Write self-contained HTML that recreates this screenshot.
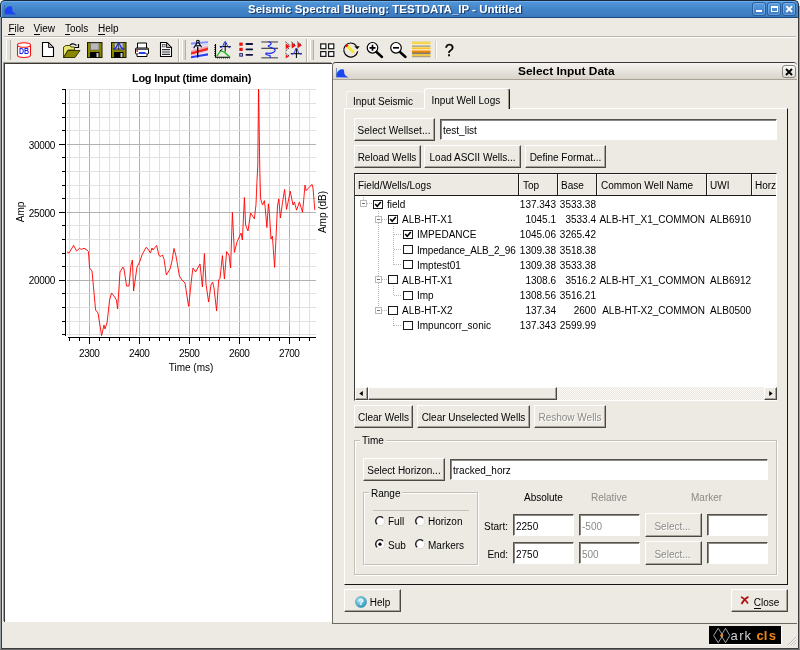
<!DOCTYPE html>
<html>
<head>
<meta charset="utf-8">
<title>Seismic Spectral Blueing</title>
<style>
html,body{margin:0;padding:0;}
body{width:800px;height:650px;overflow:hidden;background:#edeae4;font-family:"Liberation Sans",sans-serif;font-size:10px;color:#000;position:relative;}
.abs{position:absolute;}
.t{position:absolute;white-space:nowrap;line-height:12px;height:12px;}
.b{font-weight:bold;}
u{text-decoration:none;border-bottom:1px solid #000;}
/* window chrome */
#win{position:absolute;left:0;top:0;width:800px;height:650px;background:#edeae4;will-change:transform;}
#titlebar{position:absolute;left:0;top:0;width:799px;height:18px;background:linear-gradient(#5498dc 0%,#4688cc 40%,#3a78bc 100%);border:1px solid #1a2a3c;border-bottom:1px solid #1c4a80;border-top-left-radius:5px;border-top-right-radius:5px;box-shadow:inset 1px 1px 0 #6cb0f0,inset -1px 0 0 #4c8ccc;box-sizing:border-box;}
#title{position:absolute;left:246.500px;top:3px;white-space:nowrap;transform-origin:0 0;transform:scaleX(1.149);font-size:10.400px;color:#fff;font-weight:bold;font-size:10px;line-height:12px;text-shadow:1px 1px 0 #1d3f6e;}
.wbtn{position:absolute;top:1px;width:14px;height:14px;border:1px solid #2a5c9c;border-radius:3px;box-sizing:border-box;background:linear-gradient(#5c9ce0,#3c7cc4);box-shadow:inset 0 0 0 1px rgba(140,190,240,0.55);}
/* buttons */
.btn{position:absolute;box-sizing:border-box;background:#edeae4;border-top:1px solid #fff;border-left:1px solid #fff;border-right:1px solid #4a4844;border-bottom:1px solid #4a4844;box-shadow:inset -1px -1px 0 #a8a49c;text-align:center;line-height:22px;white-space:nowrap;}
.btn.dis{color:#8c8a86;text-shadow:1px 1px 0 #fff;}
.inp{position:absolute;box-sizing:border-box;background:#fff;border-top:1px solid #55524e;border-left:1px solid #55524e;border-right:1px solid #fff;border-bottom:1px solid #fff;box-shadow:inset 1px 1px 0 #8c8984;line-height:19px;padding-left:3px;white-space:nowrap;}
.inp.dis{color:#8c8a86;}
.grp{position:absolute;box-sizing:border-box;border:1px solid #c4c0b8;box-shadow:1px 1px 0 #fff, inset 1px 1px 0 #fff;}
.grp>span{position:absolute;top:-7px;left:6px;background:#edeae4;padding:0 2px;line-height:12px;}
</style>
</head>
<body>
<div id="win">

  <div class="abs" style="left:0;top:0;width:5px;height:5px;background:#f4f4f4;"></div>
  <div class="abs" style="right:0;top:0;width:5px;height:5px;background:#f4f4f4;"></div>
  <div id="titlebar">
    <svg class="abs" style="left:3px;top:3px" width="14" height="11" viewBox="0 0 14 11"><path d="M0.500 10.200 L0.500 6.800 Q2 3.500 4.300 2.600 Q6.500 2 7.700 2.400 Q8.200 4 8.400 7 Q8.800 8.800 12.600 10.400 Z" fill="#1c44f4"/><path d="M0.500 1 L0.500 10.500" stroke="#3868a8" stroke-width="0.800" opacity="0.800"/></svg>
    <div id="title">Seismic Spectral Blueing: TESTDATA_IP - Untitled</div>
    <div class="wbtn" style="left:751px;"><div class="abs" style="left:3px;top:7px;width:6px;height:2px;background:#fff;"></div></div>
    <div class="wbtn" style="left:766px;"><div class="abs" style="left:3px;top:3px;width:7px;height:6px;border:1px solid #fff;border-top-width:2px;box-sizing:border-box;"></div></div>
    <div class="wbtn" style="left:781px;"><svg class="abs" style="left:0;top:0" width="12" height="12" viewBox="0 0 12 12"><path d="M3.300 3.200 L9.100 9 M9.100 3.200 L3.300 9" stroke="#fff" stroke-width="1.900"/></svg></div>
  </div>
  <!-- window frame -->
  <div class="abs" style="left:0;top:17px;width:1px;height:633px;background:#9aa0a6;"></div>
  <div class="abs" style="left:1px;top:17px;width:1px;height:632px;background:#3c3c3c;"></div>
  <div class="abs" style="left:798px;top:17px;width:1px;height:632px;background:#3c3c3c;"></div>
  <div class="abs" style="left:799px;top:6px;width:1px;height:644px;background:#9aa0a6;"></div>
  <div class="abs" style="left:1px;top:648px;width:798px;height:1px;background:#3c3c3c;"></div>
  <div class="abs" style="left:0;top:649px;width:800px;height:1px;background:#6c6c6c;"></div>
  <!-- menu -->
  <div class="t" style="left:8.400px;top:23px;font-size:10px;"><u>F</u>ile</div>
  <div class="t" style="left:33.500px;top:23px;"><u>V</u>iew</div>
  <div class="t" style="left:65px;top:23px;"><u>T</u>ools</div>
  <div class="t" style="left:98px;top:23px;"><u>H</u>elp</div>
  <div class="abs" style="left:4px;top:36px;width:792px;height:1px;background:#b8b5ae;"></div>
  <div class="abs" style="left:4px;top:37px;width:792px;height:1px;background:#fff;"></div>
  <!-- toolbar -->
  <div id="toolbar">
<svg class="abs" style="left:0;top:38px" width="470" height="25" viewBox="0 38 470 25" shape-rendering="auto">
  <!-- handles -->
  <g>
    <rect x="6" y="40" width="4" height="20" fill="#e4e1da"/><rect x="6" y="40" width="1" height="20" fill="#fff"/><rect x="10" y="40" width="1" height="20" fill="#b4b0a8"/>
    <rect x="178" y="39" width="1" height="23" fill="#bab6ae"/><rect x="179" y="39" width="1" height="23" fill="#fff"/>
    <rect x="182" y="40" width="3" height="20" fill="#d9d5cd"/><rect x="182" y="40" width="1" height="20" fill="#fff"/><rect x="185" y="40" width="1" height="20" fill="#b4b0a8"/>
    <rect x="306" y="39" width="1" height="23" fill="#bab6ae"/><rect x="307" y="39" width="1" height="23" fill="#fff"/>
    <rect x="310" y="40" width="3" height="20" fill="#d9d5cd"/><rect x="310" y="40" width="1" height="20" fill="#fff"/><rect x="313" y="40" width="1" height="20" fill="#b4b0a8"/>
    <rect x="435" y="41" width="1" height="18" fill="#cfcbc3"/><rect x="436" y="41" width="1" height="18" fill="#fff"/>
  </g>
  <!-- DB cylinder -->
  <g fill="none" stroke="#f81010" stroke-width="1.050">
    <path d="M17.5 45 L17.5 55 Q17.5 57.5 24 57.5 Q30.5 57.5 30.5 55 L30.5 45" fill="#fff"/>
    <ellipse cx="24" cy="45" rx="6.5" ry="2.3" fill="#fff"/>
  </g>
  <text x="24.100" y="54.300" font-family="Liberation Sans" font-weight="bold" font-size="8.300" fill="#1828f0" text-anchor="middle" textLength="10.200" lengthAdjust="spacingAndGlyphs">DB</text>
  <!-- new doc -->
  <path d="M42.500 42.500 L48.500 42.500 L53.500 47.500 L53.500 56.500 L42.500 56.500 Z" fill="#fff" stroke="#000" stroke-width="1.100"/>
  <path d="M48.500 42.500 L48.500 47.500 L53.500 47.500 Z" fill="#b0b0b0" stroke="#000" stroke-width="0.800"/>
  <!-- open folder -->
  <path d="M63.5 47 L66 45.5 L70 45.5 L71 47 L74.5 47 L74.5 50 L68 50 L63.5 57.5 Z" fill="#e8e470" stroke="#3a3800" stroke-width="0.9"/>
  <path d="M63.5 57.5 L68 50.5 L80 50.5 L75 57.5 Z" fill="#8a8600" stroke="#2a2800" stroke-width="0.9"/>
  <path d="M70 45 Q73 42.5 76.5 45.5" fill="none" stroke="#000" stroke-width="1.1"/>
  <path d="M75 47.5 L78.5 47.5 L78.5 44" fill="none" stroke="#000" stroke-width="1.2"/>
  <!-- floppy -->
  <g>
    <rect x="87.5" y="42.5" width="14.5" height="15" fill="#8a8600" stroke="#1c1c00" stroke-width="1"/>
    <rect x="90.5" y="43" width="8.5" height="7" fill="#b8b8b8" stroke="#60605c" stroke-width="0.6"/>
    <rect x="90" y="52" width="9.5" height="5.5" fill="#000"/>
    <rect x="96.5" y="53" width="2" height="4" fill="#d0d0d0"/>
  </g>
  <!-- floppy + curve -->
  <g>
    <rect x="111.500" y="42.5" width="14.5" height="15" fill="#8a8600" stroke="#1c1c00" stroke-width="1"/>
    <rect x="114.5" y="43" width="8.5" height="7" fill="#c8c8c8" stroke="#60605c" stroke-width="0.6"/>
    <rect x="114" y="52" width="9.500" height="5.5" fill="#000"/>
    <rect x="120.5" y="53" width="2" height="4" fill="#d0d0d0"/>
    <path d="M118.700 43 L118.700 50 M114 49 L124 49" stroke="#000" stroke-width="0.7"/>
    <path d="M113 49 Q116 49 117.300 45 Q118.700 40.500 120 45 Q121.300 49 124.500 49" fill="none" stroke="#1828f0" stroke-width="1.2"/>
  </g>
  <!-- printer -->
  <g>
    <path d="M137.500 48 L137.500 43 L146.500 43 L146.500 48" fill="#fff" stroke="#000" stroke-width="1"/>
    <rect x="135.500" y="48" width="13" height="6" rx="1" fill="#fff" stroke="#000" stroke-width="1"/>
    <rect x="135.500" y="48.300" width="13" height="1.600" fill="#444"/>
    <path d="M137 54 L137 56.500 L147 56.500 L147 54" fill="#fff" stroke="#000" stroke-width="1"/>
    <rect x="139" y="52" width="6.500" height="2" fill="#2840f0"/>
    <rect x="136.300" y="50.200" width="1.700" height="1.600" fill="#f01010"/>
  </g>
  <!-- doc with lines -->
  <g>
    <path d="M160.500 42.500 L166.500 42.500 L171.500 47.500 L171.500 56.500 L160.500 56.500 Z" fill="#fff" stroke="#000" stroke-width="1.100"/>
    <path d="M166.500 42.500 L166.500 47.500 L171.500 47.500 Z" fill="#b0b0b0" stroke="#000" stroke-width="0.800"/>
    <rect x="162.300" y="44.500" width="2.800" height="2.400" fill="#e8e8e8" stroke="#404040" stroke-width="0.700"/><path d="M162 49.600 L170 49.600 M162 52 L170 52 M162 54.400 L170 54.400" stroke="#303030" stroke-width="1.100"/>
  </g>
  <!-- seismic with compass A -->
  <g>
    <rect x="191" y="41" width="17" height="17.300" fill="#ececfa"/>
    <path d="M191 42.600 L208 41.200 L208 43 L191 44.800 Z" fill="#5868f0" opacity="0.700"/>
    <path d="M191 46.500 L208 43.800 L208 45 L191 47.800 Z" fill="#c8ccf8" opacity="0.800"/>
    <path d="M191 50.300 L208 45.800 L208 47.600 L191 52.300 Z" fill="#f8a8a8"/>
    <path d="M191 52.300 L208 47.600 L208 50.200 L191 54.800 Z" fill="#f02828"/>
    <path d="M191 55 L208 50.400 L208 51.600 L191 56 Z" fill="#f8c0c8" opacity="0.800"/>
    <path d="M191 56.300 L208 53.300 L208 55.600 L191 58.300 Z" fill="#2c3cf0"/>
    <path d="M193.700 48.200 L197.200 42.600 A1.300 1.300 0 1 1 198.600 42.600 L201.600 47.200 M195.300 45.800 L200.300 45.800" fill="none" stroke="#000" stroke-width="1.100"/>
    <path d="M197.700 46.500 L197.700 57.600" stroke="#000" stroke-width="1.300"/>
  </g>
  <!-- chart icon -->
  <g>
    <path d="M215.500 44 L215.500 57.300 L230.200 57.300" fill="none" stroke="#000" stroke-width="1.100"/>
    <path d="M214.300 45.500 L215.500 45.500 M214.300 47.500 L215.500 47.500 M214.300 49.500 L215.500 49.500 M214.300 51.500 L215.500 51.500 M214.300 53.500 L215.500 53.500 M214.300 55.500 L215.500 55.500 M217.500 58.500 L217.500 57.500 M219.500 58.500 L219.500 57.500 M221.500 58.500 L221.500 57.500 M223.500 58.500 L223.500 57.500 M225.500 58.500 L225.500 57.500 M227.500 58.500 L227.500 57.500 M229.500 58.500 L229.500 57.500" stroke="#000" stroke-width="0.800"/>
    <path d="M216.600 56.300 L220.700 50.700 L224.700 52.400 L229.700 57" fill="none" stroke="#18c018" stroke-width="1.300"/>
    <path d="M219.800 51.200 L222.500 49" stroke="#000" stroke-width="1"/>
    <path d="M225.200 41.600 L225.200 51.600 M219.800 46.600 L230.800 46.600" stroke="#000" stroke-width="1"/>
    <path d="M220.200 47.600 Q222.300 48 223.400 45 Q225.200 38 227 45 Q228.100 48 230.300 47.600" fill="none" stroke="#2838f0" stroke-width="1"/>
  </g>
  <!-- bullets list -->
  <g>
    <rect x="239.300" y="42.600" width="3.400" height="3.200" fill="#e81010"/>
    <rect x="239.300" y="47.800" width="3.400" height="3.200" fill="#e81010"/>
    <rect x="239.800" y="53.700" width="2.600" height="2.400" fill="#fff" stroke="#101060" stroke-width="1"/>
    <rect x="245.500" y="43.100" width="7.600" height="1.800" rx="0.900" fill="#101040"/>
    <rect x="245.500" y="48.400" width="7.600" height="1.800" rx="0.900" fill="#101040"/>
    <rect x="245.500" y="53.900" width="7.600" height="1.800" rx="0.900" fill="#101040"/>
  </g>
  <!-- wave -->
  <g>
    <rect x="261.300" y="41.200" width="16.700" height="1.500" fill="#747474"/>
    <rect x="261.300" y="57" width="16.700" height="1.500" fill="#747474"/>
    <rect x="261.300" y="47.800" width="16.700" height="0.900" fill="#101010"/>
    <path d="M268.500 41.500 Q273 43 270 45 Q266 46.500 271 47.500 Q277.500 49.500 274 52 Q270.500 54.200 266.500 53 Q264 54.500 270 55.500 L270.300 58" fill="none" stroke="#1828e8" stroke-width="1.200"/>
  </g>
  <!-- red arrows -->
  <g>
    <path d="M285.700 43.600 L285.700 49.200 L290 46.400 Z" fill="#f01010"/>
    <path d="M291.700 42.700 L291.700 48.600 L296 45.600 Z" fill="#f01010"/>
    <path d="M297.500 42.600 L297.500 48.200 L302 45.300 Z" fill="#f01010"/>
    <path d="M285.700 54.800 L285.700 58.300 L289.200 56.600 Z" fill="#f01010"/>
    <path d="M285.500 41.800 L290.300 45.800 M291.500 42 L295.500 45 M297.300 41.800 L301.500 44.800 M285.500 53.300 L289 55.800 M285.700 51 L289.500 47.500" stroke="#000" stroke-width="0.900" stroke-dasharray="1.500 1.200"/>
    <path d="M296.400 48.500 L296.400 58 M290.700 53.700 L301.900 53.700" stroke="#000" stroke-width="1"/>
    <path d="M291.500 54.300 Q293.800 54.500 294.800 51.500 Q296.400 44.500 298 51.500 Q299 54.500 301.300 54.300" fill="none" stroke="#2838f0" stroke-width="1"/>
  </g>
  <!-- 4 squares -->
  <g fill="#fff" stroke="#181818" stroke-width="1.200">
    <rect x="320.700" y="43.900" width="5.200" height="4.800"/><rect x="328.600" y="43.900" width="5.200" height="4.800"/>
    <rect x="320.700" y="51.600" width="5.200" height="4.800"/><rect x="328.600" y="51.600" width="5.200" height="4.800"/>
  </g>
  <!-- circle arrow -->
  <g>
    <path d="M356.400 45.800 A7 7 0 1 0 357.700 51.300" fill="none" stroke="#000" stroke-width="1.200"/>
    <path d="M354.300 46.300 L359.700 46.300 L357.200 49.300 Z" fill="#000"/>
    <path d="M347 45.800 L353.500 52.200" stroke="#f4e828" stroke-width="2.800"/>
    <path d="M346 44.800 L347.600 46.400" stroke="#f01010" stroke-width="2.600"/>
    <path d="M353.500 52 L355 53.500" stroke="#f8d0b0" stroke-width="1.600"/>
  </g>
  <!-- zoom in -->
  <g>
    <circle cx="372.500" cy="47.800" r="5.300" fill="#fff" stroke="#000" stroke-width="1.200"/>
    <path d="M369.500 47.800 L375.500 47.800 M372.500 44.800 L372.500 50.800" stroke="#000" stroke-width="1.700"/>
    <path d="M376.500 52 L382 57" stroke="#000" stroke-width="2.400" stroke-linecap="round"/>
  </g>
  <!-- zoom out -->
  <g>
    <circle cx="396" cy="47.800" r="5.300" fill="#fff" stroke="#000" stroke-width="1.200"/>
    <path d="M393 47.800 L399 47.800" stroke="#000" stroke-width="1.700"/>
    <path d="M400 52 L405.500 57" stroke="#000" stroke-width="2.400" stroke-linecap="round"/>
  </g>
  <!-- stripes -->
  <defs><linearGradient id="sg" x1="0" y1="0" x2="0" y2="1">
    <stop offset="0" stop-color="#d4d4d4"/><stop offset="0.07" stop-color="#f8e060"/><stop offset="0.15" stop-color="#f8d040"/><stop offset="0.23" stop-color="#fff8e0"/><stop offset="0.31" stop-color="#8890a0"/><stop offset="0.38" stop-color="#f8e070"/><stop offset="0.46" stop-color="#f8c030"/><stop offset="0.53" stop-color="#fff0d0"/><stop offset="0.61" stop-color="#f09010"/><stop offset="0.68" stop-color="#e08010"/><stop offset="0.75" stop-color="#707880"/><stop offset="0.83" stop-color="#f8d050"/><stop offset="0.9" stop-color="#f0c040"/><stop offset="0.96" stop-color="#909090"/><stop offset="1" stop-color="#c4c4c4"/>
  </linearGradient></defs>
  <rect x="412" y="41" width="18.500" height="16.500" fill="url(#sg)"/>
  <!-- ? -->
  <text x="449.300" y="56.200" font-family="Liberation Sans" font-size="16.500" fill="#000" text-anchor="middle" stroke="#000" stroke-width="0.300">?</text>
</svg>
</div>

  <!-- left plot panel -->
  <div class="abs" style="left:4px;top:63px;width:328px;height:559px;background:#fff;border-top:1px solid #3c3a38;border-left:1px solid #3c3a38;box-shadow:-1px -1px 0 #a09c94;box-sizing:border-box;"></div>
  <svg class="abs" style="left:0;top:60px" width="332" height="330" viewBox="0 60 332 330" font-family="Liberation Sans" font-size="10" fill="#000">
    <g shape-rendering="crispEdges"><path d="M69.5 89 L69.5 336" stroke="#e0e0e0" stroke-width="1"/><path d="M79.5 89 L79.5 336" stroke="#e0e0e0" stroke-width="1"/><path d="M89.5 89 L89.5 336" stroke="#b2b2b2" stroke-width="1"/><path d="M99.5 89 L99.5 336" stroke="#e0e0e0" stroke-width="1"/><path d="M109.5 89 L109.5 336" stroke="#e0e0e0" stroke-width="1"/><path d="M119.5 89 L119.5 336" stroke="#e0e0e0" stroke-width="1"/><path d="M129.5 89 L129.5 336" stroke="#e0e0e0" stroke-width="1"/><path d="M139.5 89 L139.5 336" stroke="#b2b2b2" stroke-width="1"/><path d="M149.5 89 L149.5 336" stroke="#e0e0e0" stroke-width="1"/><path d="M159.5 89 L159.5 336" stroke="#e0e0e0" stroke-width="1"/><path d="M169.5 89 L169.5 336" stroke="#e0e0e0" stroke-width="1"/><path d="M179.5 89 L179.5 336" stroke="#e0e0e0" stroke-width="1"/><path d="M189.5 89 L189.5 336" stroke="#b2b2b2" stroke-width="1"/><path d="M199.5 89 L199.5 336" stroke="#e0e0e0" stroke-width="1"/><path d="M209.5 89 L209.5 336" stroke="#e0e0e0" stroke-width="1"/><path d="M219.5 89 L219.5 336" stroke="#e0e0e0" stroke-width="1"/><path d="M229.5 89 L229.5 336" stroke="#e0e0e0" stroke-width="1"/><path d="M239.5 89 L239.5 336" stroke="#b2b2b2" stroke-width="1"/><path d="M249.5 89 L249.5 336" stroke="#e0e0e0" stroke-width="1"/><path d="M259.5 89 L259.5 336" stroke="#e0e0e0" stroke-width="1"/><path d="M269.5 89 L269.5 336" stroke="#e0e0e0" stroke-width="1"/><path d="M279.5 89 L279.5 336" stroke="#e0e0e0" stroke-width="1"/><path d="M289.5 89 L289.5 336" stroke="#b2b2b2" stroke-width="1"/><path d="M299.5 89 L299.5 336" stroke="#e0e0e0" stroke-width="1"/><path d="M309.5 89 L309.5 336" stroke="#e0e0e0" stroke-width="1"/><path d="M67 89.5 L315.500 89.5" stroke="#e0e0e0" stroke-width="1"/><path d="M67 103.5 L315.500 103.5" stroke="#e0e0e0" stroke-width="1"/><path d="M67 117.5 L315.500 117.5" stroke="#e0e0e0" stroke-width="1"/><path d="M67 130.5 L315.500 130.5" stroke="#e0e0e0" stroke-width="1"/><path d="M67 144.5 L315.500 144.5" stroke="#b2b2b2" stroke-width="1"/><path d="M67 157.5 L315.500 157.5" stroke="#e0e0e0" stroke-width="1"/><path d="M67 171.5 L315.500 171.5" stroke="#e0e0e0" stroke-width="1"/><path d="M67 185.5 L315.500 185.5" stroke="#e0e0e0" stroke-width="1"/><path d="M67 198.5 L315.500 198.5" stroke="#e0e0e0" stroke-width="1"/><path d="M67 212.5 L315.500 212.5" stroke="#b2b2b2" stroke-width="1"/><path d="M67 225.5 L315.500 225.5" stroke="#e0e0e0" stroke-width="1"/><path d="M67 239.5 L315.500 239.5" stroke="#e0e0e0" stroke-width="1"/><path d="M67 253.5 L315.500 253.5" stroke="#e0e0e0" stroke-width="1"/><path d="M67 266.5 L315.500 266.5" stroke="#e0e0e0" stroke-width="1"/><path d="M67 280.5 L315.500 280.5" stroke="#b2b2b2" stroke-width="1"/><path d="M67 293.5 L315.500 293.5" stroke="#e0e0e0" stroke-width="1"/><path d="M67 307.5 L315.500 307.5" stroke="#e0e0e0" stroke-width="1"/><path d="M67 321.5 L315.500 321.5" stroke="#e0e0e0" stroke-width="1"/><path d="M67 334.5 L315.500 334.5" stroke="#e0e0e0" stroke-width="1"/>
    <path d="M65.500 89 L65.500 336" stroke="#000" stroke-width="1"/>
    <path d="M68 337.500 L316 337.500" stroke="#000" stroke-width="1"/>
    <path d="M62 89.5 L66 89.5" stroke="#000" stroke-width="1"/><path d="M62 103.5 L66 103.5" stroke="#000" stroke-width="1"/><path d="M62 117.5 L66 117.5" stroke="#000" stroke-width="1"/><path d="M62 130.5 L66 130.5" stroke="#000" stroke-width="1"/><path d="M59 144.5 L66 144.5" stroke="#000" stroke-width="1"/><path d="M62 157.5 L66 157.5" stroke="#000" stroke-width="1"/><path d="M62 171.5 L66 171.5" stroke="#000" stroke-width="1"/><path d="M62 185.5 L66 185.5" stroke="#000" stroke-width="1"/><path d="M62 198.5 L66 198.5" stroke="#000" stroke-width="1"/><path d="M59 212.5 L66 212.5" stroke="#000" stroke-width="1"/><path d="M62 225.5 L66 225.5" stroke="#000" stroke-width="1"/><path d="M62 239.5 L66 239.5" stroke="#000" stroke-width="1"/><path d="M62 253.5 L66 253.5" stroke="#000" stroke-width="1"/><path d="M62 266.5 L66 266.5" stroke="#000" stroke-width="1"/><path d="M59 280.5 L66 280.5" stroke="#000" stroke-width="1"/><path d="M62 293.5 L66 293.5" stroke="#000" stroke-width="1"/><path d="M62 307.5 L66 307.5" stroke="#000" stroke-width="1"/><path d="M62 321.5 L66 321.5" stroke="#000" stroke-width="1"/><path d="M62 334.5 L66 334.5" stroke="#000" stroke-width="1"/><path d="M69.5 337 L69.5 341" stroke="#000" stroke-width="1"/><path d="M79.5 337 L79.5 341" stroke="#000" stroke-width="1"/><path d="M89.5 337 L89.5 344" stroke="#000" stroke-width="1"/><path d="M99.5 337 L99.5 341" stroke="#000" stroke-width="1"/><path d="M109.5 337 L109.5 341" stroke="#000" stroke-width="1"/><path d="M119.5 337 L119.5 341" stroke="#000" stroke-width="1"/><path d="M129.5 337 L129.5 341" stroke="#000" stroke-width="1"/><path d="M139.5 337 L139.5 344" stroke="#000" stroke-width="1"/><path d="M149.5 337 L149.5 341" stroke="#000" stroke-width="1"/><path d="M159.5 337 L159.5 341" stroke="#000" stroke-width="1"/><path d="M169.5 337 L169.5 341" stroke="#000" stroke-width="1"/><path d="M179.5 337 L179.5 341" stroke="#000" stroke-width="1"/><path d="M189.5 337 L189.5 344" stroke="#000" stroke-width="1"/><path d="M199.5 337 L199.5 341" stroke="#000" stroke-width="1"/><path d="M209.5 337 L209.5 341" stroke="#000" stroke-width="1"/><path d="M219.5 337 L219.5 341" stroke="#000" stroke-width="1"/><path d="M229.5 337 L229.5 341" stroke="#000" stroke-width="1"/><path d="M239.5 337 L239.5 344" stroke="#000" stroke-width="1"/><path d="M249.5 337 L249.5 341" stroke="#000" stroke-width="1"/><path d="M259.5 337 L259.5 341" stroke="#000" stroke-width="1"/><path d="M269.5 337 L269.5 341" stroke="#000" stroke-width="1"/><path d="M279.5 337 L279.5 341" stroke="#000" stroke-width="1"/><path d="M289.5 337 L289.5 344" stroke="#000" stroke-width="1"/><path d="M299.5 337 L299.5 341" stroke="#000" stroke-width="1"/><path d="M309.5 337 L309.5 341" stroke="#000" stroke-width="1"/></g>
    <path d="M67.0 252.0 L69.0 253.0 L73.6 245.4 L76.6 251.0 L79.4 248.4 L81.6 249.4 L84.0 248.2 L87.0 250.0 L88.4 251.6 L89.6 268.0 L92.0 271.0 L95.6 310.0 L98.0 313.0 L101.6 335.6 L104.0 325.0 L105.0 329.0 L107.0 323.0 L109.6 300.0 L111.6 293.0 L114.0 296.0 L116.4 300.0 L117.6 309.0 L120.0 272.0 L123.0 267.0 L124.0 269.0 L126.6 286.0 L129.0 286.0 L131.0 265.0 L132.4 260.0 L133.6 291.0 L137.0 267.0 L139.6 262.0 L142.0 255.0 L146.0 247.4 L148.0 249.0 L150.4 253.0 L152.0 248.0 L153.0 250.0 L156.6 245.4 L159.0 255.6 L161.0 256.4 L162.4 255.0 L164.0 259.0 L166.4 275.0 L170.0 269.0 L172.0 261.0 L174.0 248.4 L176.0 256.0 L179.4 276.0 L182.0 280.0 L185.0 283.0 L188.6 306.4 L192.0 275.0 L193.0 268.0 L195.6 272.0 L200.0 264.0 L202.4 287.0 L204.4 253.6 L206.0 284.0 L208.6 302.0 L211.0 285.0 L212.6 282.0 L214.0 288.0 L216.6 311.0 L218.6 280.0 L220.0 278.4 L222.4 255.6 L224.4 279.0 L226.6 251.6 L229.0 255.0 L230.6 268.0 L232.4 212.4 L234.4 252.4 L237.0 242.0 L241.0 233.0 L242.4 240.0 L244.4 197.5 L245.6 225.0 L248.0 231.0 L250.6 213.0 L254.4 218.8 L256.0 204.4 L256.9 182.5 L257.8 165.0 L258.5 89.0 L259.8 170.0 L260.6 198.8 L262.5 205.0 L264.4 200.6 L265.2 207.5 L266.9 227.5 L268.4 203.8 L269.4 212.5 L271.0 239.0 L272.4 236.0 L274.6 267.4 L277.5 206.0 L278.8 198.8 L280.4 218.0 L282.5 202.5 L284.6 189.4 L286.5 209.4 L288.0 202.5 L290.2 191.2 L293.0 205.0 L294.4 202.0 L296.6 210.2 L299.4 202.0 L302.5 212.2 L303.8 198.8 L305.0 185.0 L306.2 190.6 L311.9 184.4 L313.0 188.0 L314.8 210.0" fill="none" stroke="#ff0000" stroke-width="0.900" stroke-linejoin="round"/>
    <text x="89.5" y="356.500" text-anchor="middle" textLength="20.800" lengthAdjust="spacing">2300</text><text x="139.5" y="356.500" text-anchor="middle" textLength="20.800" lengthAdjust="spacing">2400</text><text x="189.5" y="356.500" text-anchor="middle" textLength="20.800" lengthAdjust="spacing">2500</text><text x="239.5" y="356.500" text-anchor="middle" textLength="20.800" lengthAdjust="spacing">2600</text><text x="289.5" y="356.500" text-anchor="middle" textLength="20.800" lengthAdjust="spacing">2700</text><text x="55.300" y="149" text-anchor="end" textLength="26.600" lengthAdjust="spacing">30000</text><text x="55.300" y="216.500" text-anchor="end" textLength="26.600" lengthAdjust="spacing">25000</text><text x="55.300" y="284" text-anchor="end" textLength="26.600" lengthAdjust="spacing">20000</text>
    <text x="191.700" y="82" text-anchor="middle" font-weight="bold" font-size="11" textLength="119.500" lengthAdjust="spacing">Log Input (time domain)</text>
    <text x="191" y="371" text-anchor="middle">Time (ms)</text>
    <text transform="translate(24,212) rotate(-90)" text-anchor="middle">Amp</text>
    <text transform="translate(326,212) rotate(-90)" text-anchor="middle">Amp (dB)</text>
  </svg>

  <!-- dialog -->
  <div id="dlg" class="abs" style="left:332px;top:62px;width:465px;height:562px;background:#edeae4;border-left:1px solid #6c6962;border-top:1px solid #3c3a38;border-bottom:1px solid #6c6962;box-sizing:border-box;border-top-left-radius:4px;border-top-right-radius:4px;">
  </div>
  <div class="abs" style="left:333px;top:63px;width:464px;height:16px;background:linear-gradient(#f6f4f1,#e6e2db 55%,#d9d4cb);border-bottom:1px solid #aaa294;border-top-left-radius:4px;border-top-right-radius:4px;"></div>
  <svg class="abs" style="left:336px;top:66.500px" width="14" height="11" viewBox="0 0 14 11"><path d="M0.500 10.200 L0.500 6.800 Q2 3.500 4.300 2.600 Q6.500 2 7.700 2.400 Q8.200 4 8.400 7 Q8.800 8.800 12.600 10.400 Z" fill="#1c44f4"/><path d="M0.500 1 L0.500 10.500" stroke="#3868a8" stroke-width="0.800" opacity="0.800"/></svg>
  <div class="t b" style="left:517.500px;top:66px;font-size:10.400px;transform-origin:0 0;transform:scaleX(1.147);">Select Input Data</div>
  <div class="abs" style="left:782px;top:65px;width:14px;height:13px;box-sizing:border-box;border:1px solid #8c8880;border-radius:3px;background:linear-gradient(#fbfaf8,#dedad2);"><svg class="abs" style="left:2px;top:2px" width="8" height="8" viewBox="0 0 8 8"><path d="M1 1 L7 7 M7 1 L1 7" stroke="#000" stroke-width="1.900"/></svg></div>
  <div id="dlgbody">
  <style>
    .cb{position:absolute;width:10px;height:9px;box-sizing:border-box;background:#fff;border:1px solid #1c1c1c;}
    .exp{position:absolute;width:7px;height:7px;box-sizing:border-box;border:1px solid #b8b8b8;background:#fff;}
    .exp:after{content:"";position:absolute;left:1px;top:2px;width:3px;height:1px;background:#6c6c6c;}
    .hdr{position:absolute;top:174px;height:22px;box-sizing:border-box;background:#edeae4;border-top:none;border-left:none;box-shadow:inset 1px 1px 0 #f8f7f4;border-right:1px solid #1c1c1c;border-bottom:1px solid #1c1c1c;line-height:22px;padding-top:1px;padding-left:4px;white-space:nowrap;overflow:hidden;}
    .rad{position:absolute;width:9px;height:9px;box-sizing:border-box;border-radius:50%;background:#fff;border:1px solid #c8c4bc;border-top-color:#3c3a38;border-left-color:#3c3a38;transform:rotate(0deg);}
  </style>
  <!-- tabs -->
  <div class="abs" style="left:344px;top:108px;width:444px;height:477px;box-sizing:border-box;border-top:1px solid #fff;border-left:1px solid #fff;border-right:1px solid #161616;border-bottom:1px solid #161616;"></div>
  <div class="abs" style="left:346px;top:91px;width:78px;height:17px;box-sizing:border-box;border-top:1px solid #f8f6f3;border-left:1px solid #f8f6f3;border-top-left-radius:3px;border-top-right-radius:3px;background:#eae7e1;"></div>
  <div class="t" style="left:353px;top:96px;">Input Seismic</div>
  <div class="abs" style="left:424px;top:88px;width:86px;height:21px;box-sizing:border-box;border-top:1px solid #fff;border-left:1px solid #fff;border-right:1px solid #161616;border-top-left-radius:3px;border-top-right-radius:3px;background:#edeae4;box-shadow:inset -1px 0 0 #a09c94;"></div>
  <div class="t" style="left:431.500px;top:95px;">Input Well Logs</div>
  <!-- row 1 -->
  <div class="btn" style="left:354px;top:118px;width:81px;height:23px;line-height:23px;letter-spacing:0.100px;padding-right:1px;">Select Wellset...</div>
  <div class="inp" style="left:440px;top:119px;width:337px;height:21px;line-height:21px;padding-left:2px;">test_list</div>
  <!-- row 2 -->
  <div class="btn" style="left:354px;top:145px;width:67px;height:23px;line-height:23px;padding-right:1px;">Reload Wells</div>
  <div class="btn" style="left:424px;top:145px;width:97px;height:23px;line-height:23px;">Load ASCII Wells...</div>
  <div class="btn" style="left:525px;top:145px;width:81px;height:23px;line-height:23px;">Define Format...</div>
  <!-- tree -->
  <div class="abs" style="left:354px;top:173px;width:423px;height:228px;box-sizing:border-box;background:#fff;border-top:1px solid #1c1c1c;border-left:1px solid #3c3a38;border-right:1px solid #fff;border-bottom:1px solid #fff;"></div>
  <div class="hdr" style="left:355px;width:164px;padding-left:3px;">Field/Wells/Logs</div>
  <div class="hdr" style="left:519px;width:39px;">Top</div>
  <div class="hdr" style="left:558px;width:39px;padding-left:3px;">Base</div>
  <div class="hdr" style="left:597px;width:110px;">Common Well Name</div>
  <div class="hdr" style="left:707px;width:45px;padding-left:3px;">UWI</div>
  <div class="hdr" style="left:752px;width:24px;border-right:none;padding-left:3px;">Horz</div>
  <svg class="abs" style="left:354px;top:195px" width="60" height="140" viewBox="354 195 60 140" fill="none" stroke="#b8b8b8" stroke-width="1" stroke-dasharray="1 1" shape-rendering="crispEdges"><path d="M367 203.5 L372 203.5" /><path d="M363.5 197 L363.5 200" /><path d="M378.5 211 L378.5 307" /><path d="M382 219.5 L387 219.5" /><path d="M382 279.5 L387 279.5" /><path d="M382 310.5 L387 310.5" /><path d="M393.5 226 L393.5 264.5" /><path d="M394 234.5 L401 234.5" /><path d="M394 249.5 L401 249.5" /><path d="M394 264.5 L401 264.5" /><path d="M393.5 286 L393.5 295.5" /><path d="M394 295.5 L401 295.5" /><path d="M393.5 317 L393.5 325.5" /><path d="M394 325.5 L401 325.5" /></svg><div class="cb" style="left:373px;top:200px;"><svg width="10" height="9" viewBox="0 0 10 9" style="position:absolute;left:-1px;top:-1px"><path d="M2.200 4 L4.200 6.300 L7.800 1.900" fill="none" stroke="#000" stroke-width="1.600"/></svg></div><div class="t" style="left:387px;top:199px;">field</div><div class="t" style="right:244px;top:199px;">137.343</div><div class="t" style="right:204px;top:199px;">3533.38</div><div class="exp" style="left:360px;top:200px;"></div><div class="cb" style="left:388px;top:215px;"><svg width="10" height="9" viewBox="0 0 10 9" style="position:absolute;left:-1px;top:-1px"><path d="M2.200 4 L4.200 6.300 L7.800 1.900" fill="none" stroke="#000" stroke-width="1.600"/></svg></div><div class="t" style="left:402px;top:214px;">ALB-HT-X1</div><div class="t" style="right:244px;top:214px;">1045.1</div><div class="t" style="right:204px;top:214px;">3533.4</div><div class="t" style="right:95px;top:214px;">ALB-HT_X1_COMMON</div><div class="t" style="left:710px;top:214px;">ALB6910</div><div class="exp" style="left:375px;top:216px;"></div><div class="cb" style="left:403px;top:230px;"><svg width="10" height="9" viewBox="0 0 10 9" style="position:absolute;left:-1px;top:-1px"><path d="M2.200 4 L4.200 6.300 L7.800 1.900" fill="none" stroke="#000" stroke-width="1.600"/></svg></div><div class="t" style="left:417px;top:229px;">IMPEDANCE</div><div class="t" style="right:244px;top:229px;">1045.06</div><div class="t" style="right:204px;top:229px;">3265.42</div><div class="cb" style="left:403px;top:245px;"></div><div class="t" style="left:417px;top:245px;letter-spacing:-0.180px;">Impedance_ALB_2_96</div><div class="t" style="right:244px;top:245px;">1309.38</div><div class="t" style="right:204px;top:245px;">3518.38</div><div class="cb" style="left:403px;top:260px;"></div><div class="t" style="left:417px;top:260px;">Imptest01</div><div class="t" style="right:244px;top:260px;">1309.38</div><div class="t" style="right:204px;top:260px;">3533.38</div><div class="cb" style="left:388px;top:275px;"></div><div class="t" style="left:402px;top:275px;">ALB-HT-X1</div><div class="t" style="right:244px;top:275px;">1308.6</div><div class="t" style="right:204px;top:275px;">3516.2</div><div class="t" style="right:95px;top:275px;">ALB-HT_X1_COMMON</div><div class="t" style="left:710px;top:275px;">ALB6912</div><div class="exp" style="left:375px;top:276px;"></div><div class="cb" style="left:403px;top:291px;"></div><div class="t" style="left:417px;top:290px;">Imp</div><div class="t" style="right:244px;top:290px;">1308.56</div><div class="t" style="right:204px;top:290px;">3516.21</div><div class="cb" style="left:388px;top:306px;"></div><div class="t" style="left:402px;top:305px;">ALB-HT-X2</div><div class="t" style="right:244px;top:305px;">137.34</div><div class="t" style="right:204px;top:305px;">2600</div><div class="t" style="right:95px;top:305px;">ALB-HT-X2_COMMON</div><div class="t" style="left:710px;top:305px;">ALB0500</div><div class="exp" style="left:375px;top:307px;"></div><div class="cb" style="left:403px;top:321px;"></div><div class="t" style="left:417px;top:320px;">Impuncorr_sonic</div><div class="t" style="right:244px;top:320px;">137.343</div><div class="t" style="right:204px;top:320px;">2599.99</div>
  <!-- scrollbar -->
  <div class="abs" style="left:355px;top:387px;width:421px;height:13px;background:#f4f2ee;background-image:repeating-conic-gradient(#e9e6e0 0% 25%, #fbfaf8 0% 50%);background-size:2px 2px;"></div>
  <div class="btn" style="left:355px;top:387px;width:13px;height:13px;"><svg class="abs" style="left:3px;top:3px" width="4" height="5" viewBox="0 0 4 5"><path d="M3.800 0 L3.800 5 L0.300 2.500 Z" fill="#000"/></svg></div>
  <div class="btn" style="left:368px;top:387px;width:189px;height:13px;"></div>
  <div class="btn" style="left:764px;top:387px;width:13px;height:13px;"><svg class="abs" style="left:4px;top:3px" width="4" height="5" viewBox="0 0 4 5"><path d="M0.200 0 L0.200 5 L3.700 2.500 Z" fill="#000"/></svg></div>
  <!-- row 3 -->
  <div class="btn" style="left:354px;top:405px;width:59px;height:23px;line-height:23px;">Clear Wells</div>
  <div class="btn" style="left:417px;top:405px;width:113px;height:23px;line-height:23px;">Clear Unselected Wells</div>
  <div class="btn dis" style="left:534px;top:405px;width:72px;height:23px;line-height:23px;">Reshow Wells</div>
  <!-- Time group -->
  <div class="grp" style="left:354px;top:440px;width:423px;height:135px;"><span style="top:-6px;left:5px">Time</span></div>
  <div class="btn" style="left:363px;top:458px;width:82px;height:23px;line-height:23px;">Select Horizon...</div>
  <div class="inp" style="left:450px;top:459px;width:318px;height:21px;line-height:21px;padding-left:2px;">tracked_horz</div>
  <div class="grp" style="left:363px;top:492px;width:115px;height:73px;"><span style="top:-5px;left:5px">Range</span></div>
  <div class="abs" style="left:373px;top:510px;width:96px;height:1px;background:#c4c0b8;"></div>
  <svg class="abs" style="left:374.5px;top:515.5px" width="11" height="11" viewBox="0 0 11 11"><circle cx="5.200" cy="5.300" r="4" fill="#fff"/><path d="M2.100 8.300 A4.200 4.200 0 0 1 8 1.900" fill="none" stroke="#1c1c1c" stroke-width="1.400"/><path d="M8.300 2.300 A4.200 4.200 0 0 1 2.400 8.600" fill="none" stroke="#d8d4cc" stroke-width="0.700"/></svg><div class="t" style="left:388px;top:516px;">Full</div>
  <svg class="abs" style="left:414.5px;top:515.5px" width="11" height="11" viewBox="0 0 11 11"><circle cx="5.200" cy="5.300" r="4" fill="#fff"/><path d="M2.100 8.300 A4.200 4.200 0 0 1 8 1.900" fill="none" stroke="#1c1c1c" stroke-width="1.400"/><path d="M8.300 2.300 A4.200 4.200 0 0 1 2.400 8.600" fill="none" stroke="#d8d4cc" stroke-width="0.700"/></svg><div class="t" style="left:428px;top:516px;">Horizon</div>
  <svg class="abs" style="left:374.5px;top:539px" width="11" height="11" viewBox="0 0 11 11"><circle cx="5.200" cy="5.300" r="4" fill="#fff"/><path d="M2.100 8.300 A4.200 4.200 0 0 1 8 1.900" fill="none" stroke="#1c1c1c" stroke-width="1.400"/><path d="M8.300 2.300 A4.200 4.200 0 0 1 2.400 8.600" fill="none" stroke="#d8d4cc" stroke-width="0.700"/><circle cx="5" cy="5.200" r="1.600" fill="#000"/></svg><div class="t" style="left:388px;top:540px;">Sub</div>
  <svg class="abs" style="left:414.5px;top:539px" width="11" height="11" viewBox="0 0 11 11"><circle cx="5.200" cy="5.300" r="4" fill="#fff"/><path d="M2.100 8.300 A4.200 4.200 0 0 1 8 1.900" fill="none" stroke="#1c1c1c" stroke-width="1.400"/><path d="M8.300 2.300 A4.200 4.200 0 0 1 2.400 8.600" fill="none" stroke="#d8d4cc" stroke-width="0.700"/></svg><div class="t" style="left:428px;top:540px;">Markers</div>
  <div class="t" style="left:524px;top:492px;">Absolute</div>
  <div class="t" style="left:591px;top:492px;color:#8c8a86;">Relative</div>
  <div class="t" style="left:691px;top:492px;color:#8c8a86;">Marker</div>
  <div class="t" style="right:292px;top:521px;">Start:</div>
  <div class="t" style="right:292px;top:549px;">End:</div>
  <div class="inp" style="left:513px;top:514px;width:61px;height:22px;line-height:23px;padding-left:2px;">2250</div>
  <div class="inp" style="left:513px;top:542px;width:61px;height:22px;line-height:23px;padding-left:2px;">2750</div>
  <div class="inp dis" style="left:579px;top:514px;width:61px;height:22px;line-height:23px;padding-left:2px;">-500</div>
  <div class="inp dis" style="left:579px;top:542px;width:61px;height:22px;line-height:23px;padding-left:2px;">500</div>
  <div class="btn dis" style="left:645px;top:513px;width:57px;height:24px;line-height:25px;padding-right:2px;">Select...</div>
  <div class="btn dis" style="left:645px;top:541px;width:57px;height:24px;line-height:25px;padding-right:2px;">Select...</div>
  <div class="inp" style="left:707px;top:514px;width:61px;height:22px;"></div>
  <div class="inp" style="left:707px;top:542px;width:61px;height:22px;"></div>
  <!-- bottom buttons -->
  <div class="btn" style="left:344px;top:589px;width:57px;height:23px;line-height:25px;padding-left:15px;">Help</div>
  <svg class="abs" style="left:354.500px;top:595.500px" width="12" height="12" viewBox="0 0 12 12"><defs><radialGradient id="hg" cx="0.4" cy="0.35" r="0.7"><stop offset="0" stop-color="#c8f0f8"/><stop offset="0.6" stop-color="#58b8d8"/><stop offset="1" stop-color="#2888b0"/></radialGradient></defs><circle cx="6" cy="6" r="5.500" fill="url(#hg)" stroke="#4898b8" stroke-width="0.600"/><text x="6" y="9.300" font-family="Liberation Sans" font-weight="bold" font-size="9" fill="#fff" text-anchor="middle">?</text></svg>
  <div class="btn" style="left:731px;top:589px;width:57px;height:23px;line-height:25px;padding-left:14px;"><u>C</u>lose</div>
  <svg class="abs" style="left:740px;top:596px" width="10" height="9" viewBox="0 0 10 9"><path d="M1 1 Q4 2 8 7.500 M8.500 0.800 Q4 3 1.500 8" fill="none" stroke="#b01010" stroke-width="1.700"/></svg>
  <!-- status -->
  <div class="abs" style="left:709px;top:626px;width:72px;height:18px;background:#000;box-shadow:1px 1px 0 #fff;"></div>
  <svg class="abs" style="left:709px;top:626px" width="72" height="19" viewBox="0 0 72 19">
    <path d="M4.600 9.500 L9.200 2.300 L13.800 9.500 L9.200 16.700 Z M12.200 9.500 L16.500 2.300 L20.800 9.500 L16.500 16.700 Z" fill="none" stroke="#c8c8c8" stroke-width="0.800"/>
    <path d="M12.600 6.500 L14 9.500 L12.600 12.500 L11.200 9.500 Z" fill="#f08818"/>
    <text x="21.600 30.200 35.600" y="13.600" font-family="Liberation Sans" font-size="13" fill="#d0d0d0">ark</text>
    <text x="47.400 54.800 59.700" y="13.600" font-family="Liberation Sans" font-weight="bold" font-size="13" fill="#f08818">cls</text>
  </svg>
  <svg class="abs" style="left:787px;top:636px" width="10" height="10" viewBox="0 0 12 12"><path d="M11 1 L1 11 M11 4.500 L4.500 11 M11 8 L8 11" stroke="#a8a49c" stroke-width="1"/><path d="M11 2 L2 11 M11 5.500 L5.500 11 M11 9 L9 11" stroke="#fff" stroke-width="0.800"/></svg>
</div>
</div>
</body>
</html>
